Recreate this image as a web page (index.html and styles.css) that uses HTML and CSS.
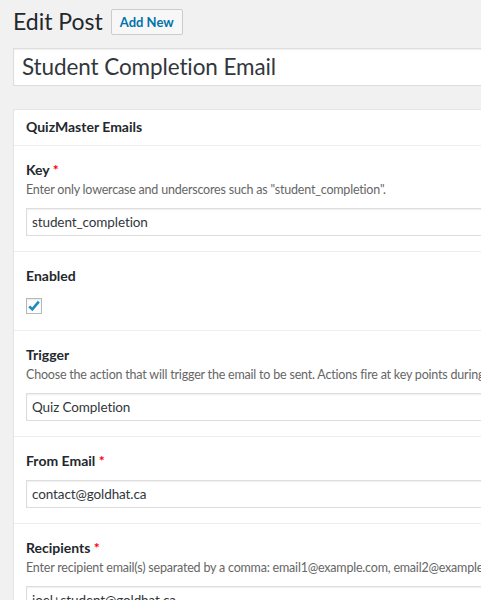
FILE: index.html
```html
<!DOCTYPE html>
<html>
<head>
<meta charset="utf-8">
<link rel="stylesheet" href="styles.css">
</head>
<body>
<div class="wrap">
  <div class="page-head">
    <h1 class="page-title">Edit Post</h1>
    <a class="add-new" href="#">Add New</a>
  </div>
  <div class="title-field">Student Completion Email</div>

  <div class="postbox">
    <h2 class="postbox-head">QuizMaster Emails</h2>

    <div class="field">
      <div class="label">Key <span class="req">*</span></div>
      <div class="desc">Enter only lowercase and underscores such as "student_completion".</div>
      <div class="input">student_completion</div>
    </div>

    <div class="field field-check">
      <div class="label">Enabled</div>
      <div class="checkbox">
        <svg width="14" height="14" viewBox="0 0 14 14"><path d="M2.2 7.4 L5.3 10.3 L11.8 2.6" fill="none" stroke="#1e8cbe" stroke-width="2.6" stroke-linejoin="miter" stroke-linecap="butt"/></svg>
      </div>
    </div>

    <div class="field">
      <div class="label">Trigger</div>
      <div class="desc">Choose the action that will trigger the email to be sent. Actions fire at key points during the quiz process.</div>
      <div class="input">Quiz Completion</div>
    </div>

    <div class="field">
      <div class="label">From Email <span class="req">*</span></div>
      <div class="input">contact@goldhat.ca</div>
    </div>

    <div class="field">
      <div class="label">Recipients <span class="req">*</span></div>
      <div class="desc">Enter recipient email(s) separated by a comma: email1@example.com, email2@example.com</div>
      <div class="input">joel+student@goldhat.ca</div>
    </div>
  </div>
</div>
</body>
</html>
```

FILE: styles.css
```css
html, body {
  margin: 0;
  padding: 0;
  overflow: hidden;
  background: #f1f1f1;
}
body {
  font-family: Lato, "Open Sans", sans-serif;
  color: #23282d;
  font-size: 12.5px;
}
.wrap {
  padding: 7px 0 0 13px;
  width: 800px;
}
.page-head {
  display: flex;
  align-items: center;
  gap: 8px;
  height: 29px;
}
.page-title {
  margin: 0;
  font-size: 23px;
  font-weight: 400;
  line-height: 29px;
}
.add-new {
  display: inline-block;
  box-sizing: border-box;
  height: 26px;
  line-height: 24px;
  padding: 0 8px;
  border: 1px solid #ccc;
  border-radius: 2px;
  background: #f7f7f7;
  color: #0073aa;
  font-size: 13px;
  font-weight: 700;
  text-decoration: none;
}
.title-field {
  margin-top: 12px;
  box-sizing: border-box;
  height: 38px;
  line-height: 36px;
  padding: 0 8px;
  border: 1px solid #ddd;
  background: #fff;
  box-shadow: inset 0 1px 2px rgba(0,0,0,.07);
  font-size: 22.5px;
  letter-spacing: -0.1px;
  color: #32373c;
}
.postbox {
  margin-top: 23px;
  border: 1px solid #e5e5e5;
  background: #fff;
  box-shadow: 0 1px 1px rgba(0,0,0,.04);
}
.postbox-head {
  margin: 0;
  padding: 7px 12px 8px;
  line-height: 20px;
  font-size: 14px;
  font-weight: 700;
  border-bottom: 1px solid #eee;
}
.field {
  padding: 14px 12px 15px;
  border-bottom: 1px solid #eee;
}
.field-check {
  padding-bottom: 16px;
}
.label {
  font-size: 14px;
  font-weight: 700;
  line-height: 20px;
  color: #23282d;
}
.req {
  color: #f00;
}
.desc {
  font-size: 12.5px;
  letter-spacing: -0.2px;
  line-height: 19px;
  color: #666;
  white-space: nowrap;
}
.input {
  margin-top: 9px;
  box-sizing: border-box;
  height: 28px;
  line-height: 26px;
  padding: 0 5px;
  border: 1px solid #ddd;
  background: #fff;
  box-shadow: inset 0 1px 2px rgba(0,0,0,.07);
  font-size: 13.5px;
  letter-spacing: -0.1px;
  color: #32373c;
}
.checkbox {
  margin-top: 12px;
  box-sizing: border-box;
  width: 16px;
  height: 16px;
  border: 1px solid #b4b9be;
  background: #fff;
  box-shadow: inset 0 1px 2px rgba(0,0,0,.1);
  display: flex;
  align-items: center;
  justify-content: center;
}
.checkbox svg {
  display: block;
}
```
